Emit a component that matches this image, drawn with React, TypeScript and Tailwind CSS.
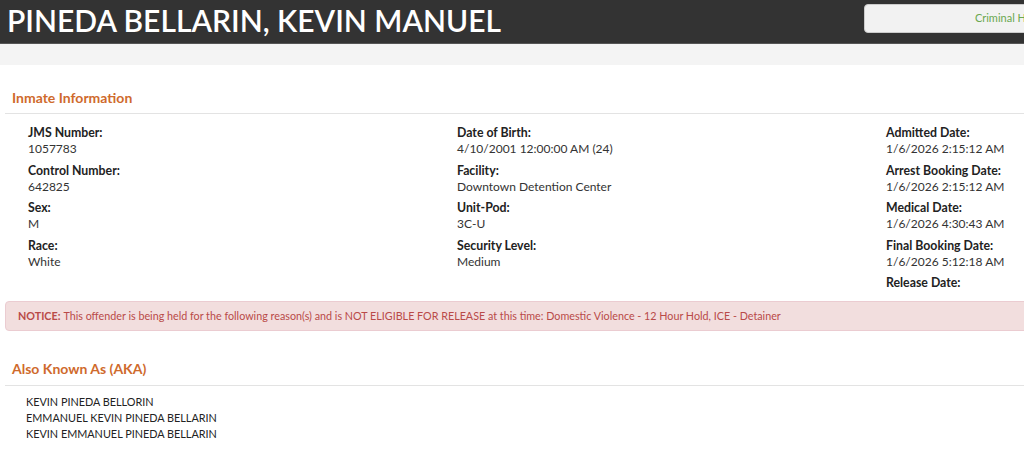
import React from "react";

const col1 = [
  ["JMS Number:", "1057783"],
  ["Control Number:", "642825"],
  ["Sex:", "M"],
  ["Race:", "White"],
];
const col2 = [
  ["Date of Birth:", "4/10/2001 12:00:00 AM (24)"],
  ["Facility:", "Downtown Detention Center"],
  ["Unit-Pod:", "3C-U"],
  ["Security Level:", "Medium"],
];
const col3 = [
  ["Admitted Date:", "1/6/2026 2:15:12 AM"],
  ["Arrest Booking Date:", "1/6/2026 2:15:12 AM"],
  ["Medical Date:", "1/6/2026 4:30:43 AM"],
  ["Final Booking Date:", "1/6/2026 5:12:18 AM"],
  ["Release Date:", ""],
];

function Col({ items }: { items: string[][] }) {
  return (
    <div className="flex w-[429px] shrink-0 flex-col gap-[5.5px] pl-[15px]">
      {items.map(([l, v]) => (
        <div key={l} className="flex flex-col">
          <div className="h-[16px] text-[12.3px] font-bold leading-[16px] text-[#222]">{l}</div>
          {v ? <div className="h-[16px] text-[12px] leading-[16px] text-[#333]">{v}</div> : null}
        </div>
      ))}
    </div>
  );
}

export default function App() {
  return (
    <div
      className="h-[451px] w-[1024px] overflow-hidden bg-white"
      style={{ fontFamily: "Lato, 'Open Sans', sans-serif" }}
    >
      <div className="flex h-[44px] w-[1300px] items-start justify-between border-b border-[#555] bg-[#333]">
        <h1 className="pl-[7px] pt-[0px] text-[30px] font-semibold leading-[40px] text-white">
          PINEDA BELLARIN, KEVIN MANUEL
        </h1>
        <div className="mr-[136px] mt-[4px] flex h-[29px] w-[300px] items-center justify-center rounded-[4px] border border-[#ccc] bg-[#f2f2f2] text-[11px] text-[#6aa84f]">
          Criminal History
        </div>
      </div>
      <div className="h-[21px] bg-[#f4f4f4]" />
      <div className="pt-[24px]">
        <div className="ml-[5px] border-b border-[#e3e3e3] pb-[6px] pl-[7px] text-[14px] font-bold leading-[18px] text-[#cf6a2c]">
          Inmate Information
        </div>
        <div className="flex pl-[13px] pt-[11px]">
          <Col items={col1} />
          <Col items={col2} />
          <Col items={col3} />
        </div>
        <div className="ml-[5px] mt-[10px] flex h-[30px] w-[1100px] items-center rounded-[4px] border border-[#ebccd1] bg-[#f2dede] pl-[12px] text-[10.75px] text-[#b94a48]">
          <span className="font-bold">NOTICE:</span>
          <span className="ml-[3px]">
            This offender is being held for the following reason(s) and is NOT ELIGIBLE FOR RELEASE at this time: Domestic Violence - 12 Hour Hold, ICE - Detainer
          </span>
        </div>
        <div className="ml-[5px] mt-[29px] border-b border-[#e3e3e3] pb-[7px] pl-[7px] text-[14px] font-bold leading-[18px] text-[#cf6a2c]">
          Also Known As (AKA)
        </div>
        <div className="flex flex-col pl-[26px] pt-[8px] text-[10.85px] leading-[16px] text-[#222]">
          <div>KEVIN PINEDA BELLORIN</div>
          <div>EMMANUEL KEVIN PINEDA BELLARIN</div>
          <div>KEVIN EMMANUEL PINEDA BELLARIN</div>
        </div>
      </div>
    </div>
  );
}
